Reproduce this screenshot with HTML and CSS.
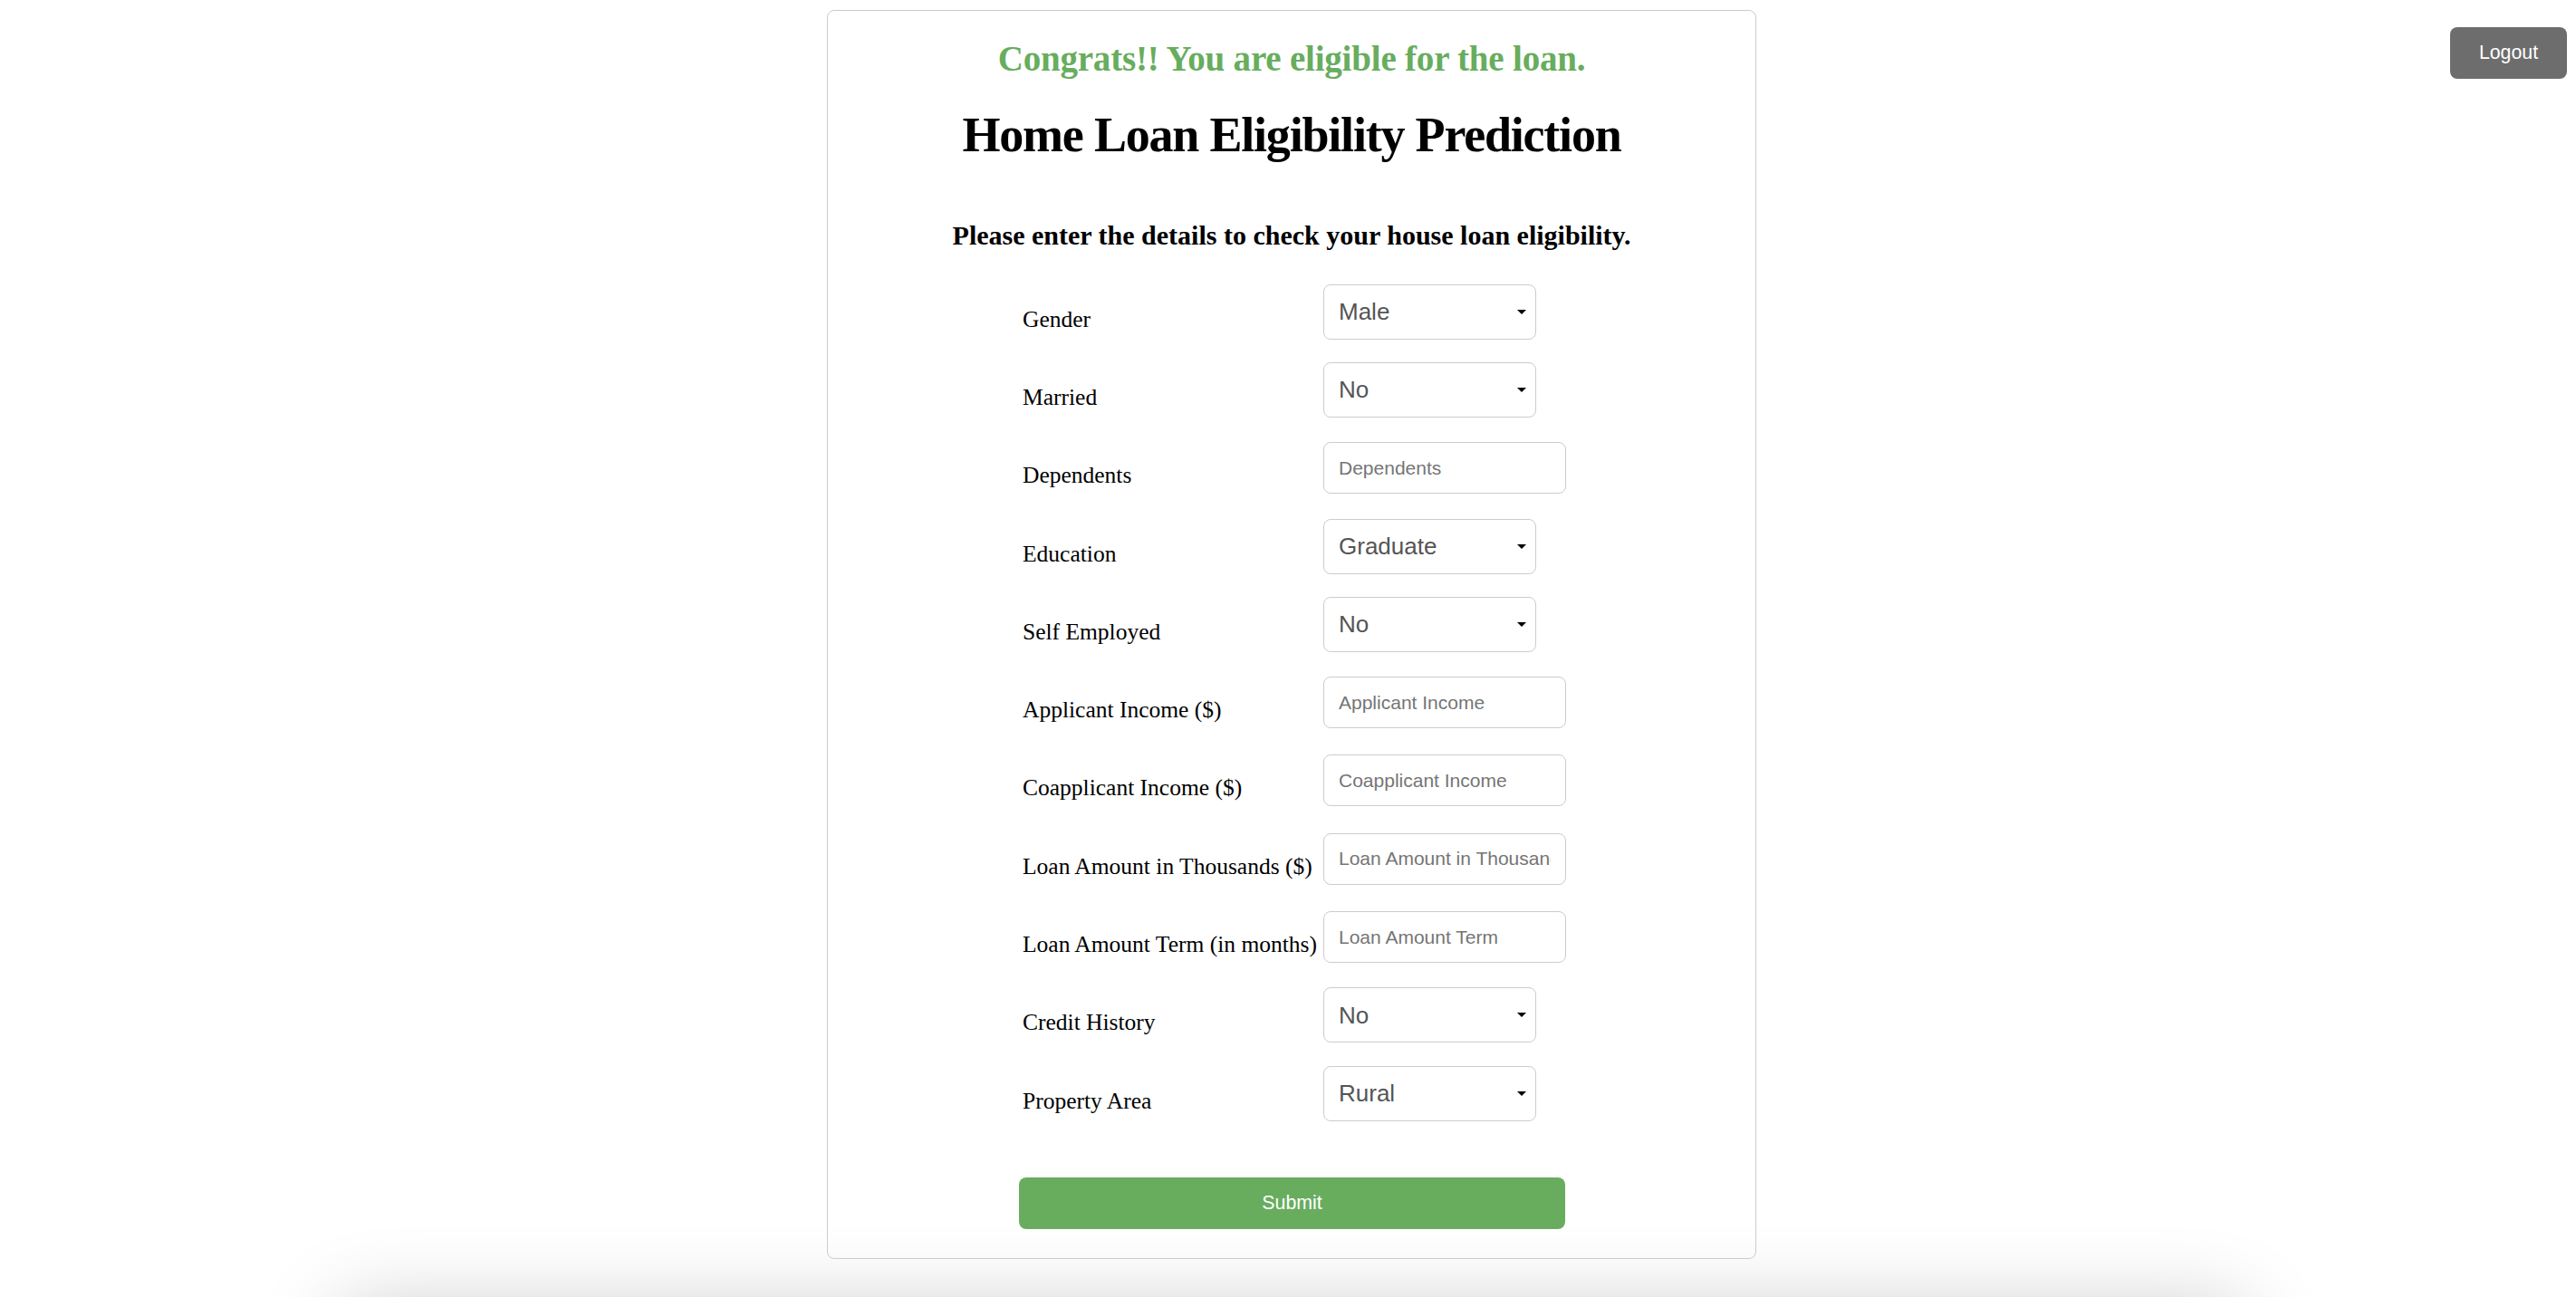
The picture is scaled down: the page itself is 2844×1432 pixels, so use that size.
FILE: index.html
```html
<!DOCTYPE html>
<html lang="en">
<head>
<meta charset="utf-8">
<title>Home Loan Eligibility Prediction</title>
<link rel="stylesheet" href="styles.css">
</head>
<body>
<button class="logout" type="button">Logout</button>
<main class="page">
  <div class="card">
    <h2 class="result">Congrats!! You are eligible for the loan.</h2>
    <h1 class="title">Home Loan Eligibility Prediction</h1>
    <h3 class="subtitle">Please enter the details to check your house loan eligibility.</h3>
    <form class="form">
      <div class="row">
        <label class="label">Gender</label>
        <div class="select-wrap"><select class="select"><option>Male</option><option>Female</option></select></div>
      </div>
      <div class="row">
        <label class="label">Married</label>
        <div class="select-wrap"><select class="select"><option>No</option><option>Yes</option></select></div>
      </div>
      <div class="row">
        <label class="label">Dependents</label>
        <input class="input" type="text" placeholder="Dependents">
      </div>
      <div class="row">
        <label class="label">Education</label>
        <div class="select-wrap"><select class="select"><option>Graduate</option><option>Not Graduate</option></select></div>
      </div>
      <div class="row">
        <label class="label">Self Employed</label>
        <div class="select-wrap"><select class="select"><option>No</option><option>Yes</option></select></div>
      </div>
      <div class="row">
        <label class="label">Applicant Income ($)</label>
        <input class="input" type="text" placeholder="Applicant Income">
      </div>
      <div class="row">
        <label class="label">Coapplicant Income ($)</label>
        <input class="input" type="text" placeholder="Coapplicant Income">
      </div>
      <div class="row">
        <label class="label">Loan Amount in Thousands ($)</label>
        <input class="input" type="text" placeholder="Loan Amount in Thousands">
      </div>
      <div class="row">
        <label class="label">Loan Amount Term (in months)</label>
        <input class="input" type="text" placeholder="Loan Amount Term">
      </div>
      <div class="row">
        <label class="label">Credit History</label>
        <div class="select-wrap"><select class="select"><option>No</option><option>Yes</option></select></div>
      </div>
      <div class="row">
        <label class="label">Property Area</label>
        <div class="select-wrap"><select class="select"><option>Rural</option><option>Semiurban</option><option>Urban</option></select></div>
      </div>
      <button class="submit" type="button">Submit</button>
    </form>
  </div>
  <div class="ground"></div>
</main>
</body>
</html>
```
FILE: styles.css
```css
html, body {
  margin: 0;
  padding: 0;
  background: #ffffff;
}

body {
  font-family: "Liberation Serif", "Times New Roman", serif;
  color: #000;
  position: relative;
  overflow: hidden;
  height: 1432px;
}

.logout {
  position: absolute;
  top: 30px;
  right: 10px;
  width: 129px;
  height: 57px;
  border: none;
  border-radius: 8px;
  background: #6d6d6d;
  color: #fff;
  font-family: "Liberation Sans", Arial, sans-serif;
  font-size: 21.33px;
  cursor: pointer;
}

.page {
  display: flex;
  flex-direction: column;
  align-items: center;
  padding-left: 8px;
  padding-top: 11px;
}

.card {
  width: 1024px;
  border: 1px solid #cccccc;
  border-radius: 8px;
  padding: 31px 0 32px;
  text-align: center;
  position: relative;
  z-index: 1;
}

.result {
  margin: 0;
  font-size: 39px;
  letter-spacing: -0.2px;
  line-height: 44px;
  font-weight: bold;
  color: #67ad5e;
}

.title {
  margin: 30px 0 0;
  font-size: 54px;
  letter-spacing: -1.2px;
  line-height: 64px;
  font-weight: bold;
}

.subtitle {
  margin: 63px 0 0;
  font-size: 30px;
  line-height: 32px;
  font-weight: bold;
}

.form {
  width: 606px;
  padding-left: 4px;
  margin: 25px auto 0;
  text-align: left;
}

.row {
  display: grid;
  grid-template-columns: 336px 1fr;
  align-items: center;
  height: 86.3px;
}

.label {
  padding-left: 4px;
  padding-top: 17px;
  font-size: 25.5px;
  line-height: 30px;
  white-space: nowrap;
}

.select-wrap {
  position: relative;
  width: 235px;
}

.select-wrap::after {
  content: "";
  position: absolute;
  right: 11px;
  top: 28px;
  border-left: 5px solid transparent;
  border-right: 5px solid transparent;
  border-top: 5px solid #000;
  pointer-events: none;
}

.select {
  -webkit-appearance: none;
  appearance: none;
  display: block;
  width: 235px;
  height: 61px;
  box-sizing: border-box;
  border: 1px solid #cccccc;
  border-radius: 8px;
  background: #fff;
  padding: 0 30px 0 16px;
  font-family: "Liberation Sans", Arial, sans-serif;
  font-size: 26px;
  color: #555555;
  outline: none;
}

.input {
  display: block;
  width: 268px;
  height: 57px;
  box-sizing: border-box;
  border: 1px solid #cccccc;
  border-radius: 8px;
  background: #fff;
  padding: 0 16px;
  font-family: "Liberation Sans", Arial, sans-serif;
  font-size: 21px;
  color: #555555;
  outline: none;
}

.input::placeholder {
  color: #757575;
}

.submit {
  display: block;
  width: 603px;
  height: 57px;
  margin-top: 50px;
  border: none;
  border-radius: 8px;
  background: #68ad5e;
  color: #fff;
  font-family: "Liberation Sans", Arial, sans-serif;
  font-size: 21.33px;
  cursor: pointer;
}

.ground {
  width: 2100px;
  height: 120px;
  margin-top: 55px;
  box-shadow: 0 0 90px rgba(0, 0, 0, 0.22);
  background: #e6e6e6;
}
```
